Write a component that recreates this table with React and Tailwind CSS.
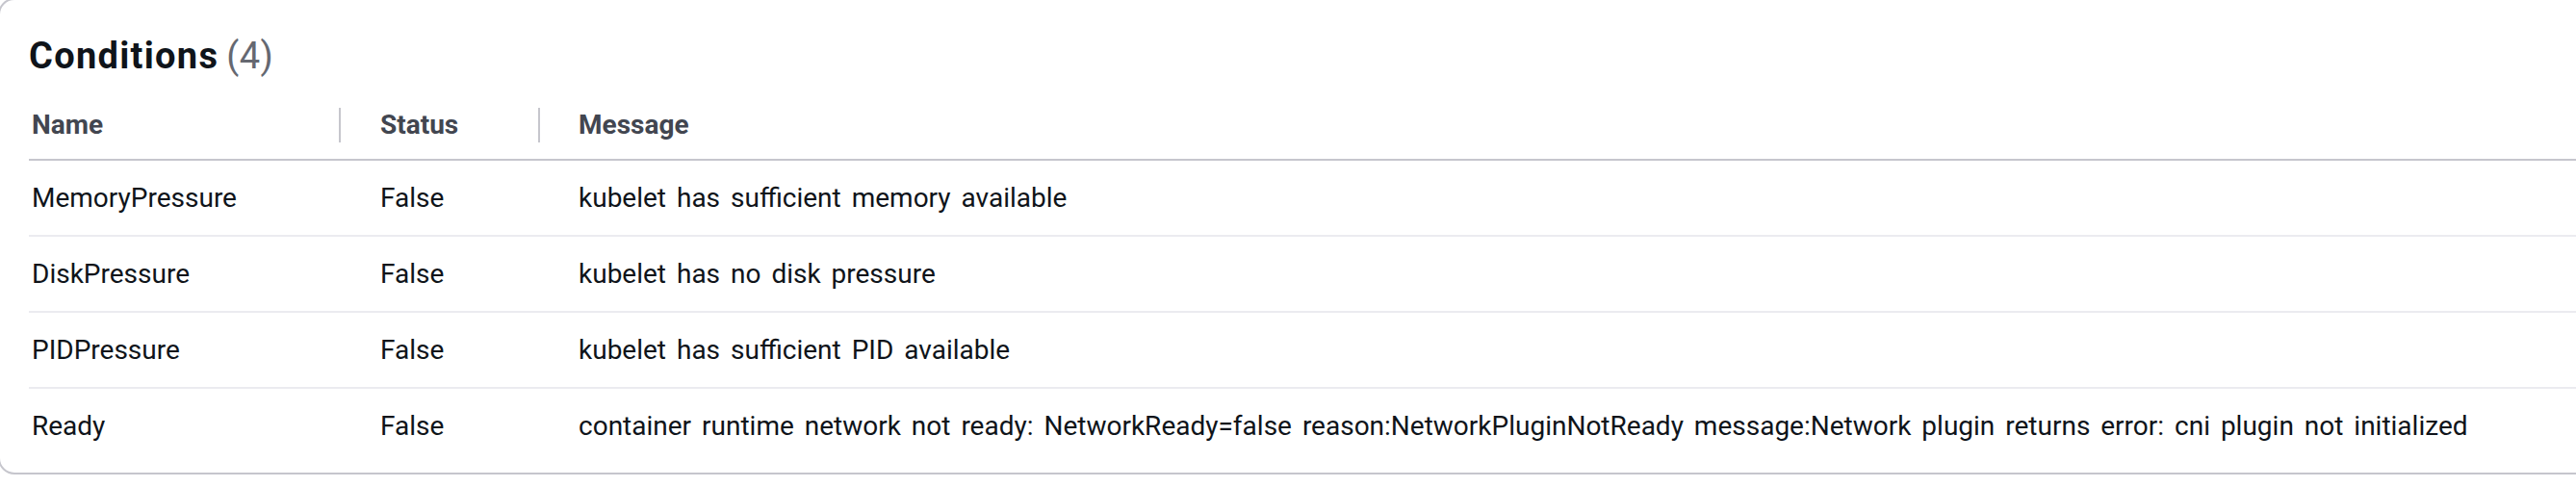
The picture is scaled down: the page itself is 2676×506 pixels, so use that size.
import React from 'react';

// Rows of the node conditions table
const conditions = [
    { name: 'MemoryPressure', status: 'False', message: 'kubelet has sufficient memory available' },
    { name: 'DiskPressure', status: 'False', message: 'kubelet has no disk pressure' },
    { name: 'PIDPressure', status: 'False', message: 'kubelet has sufficient PID available' },
    {
        name: 'Ready',
        status: 'False',
        message:
            'container runtime network not ready: NetworkReady=false reason:NetworkPluginNotReady message:Network plugin returns error: cni plugin not initialized',
    },
];

// Header cell with the resize divider on its right edge
const HeaderCell = ({ label, first, divider }) => (
    <div className={`flex items-center justify-between pt-[15px] pb-[15px] ${first ? 'pl-[3px]' : 'pl-[41px]'}`}>
        <span className="text-[28px] leading-[40px] font-bold text-[#424650]">{label}</span>
        {divider && <span className="w-[2px] h-[36px] bg-[#c6c6cd]" />}
    </div>
);

const Row = ({ item, last }) => (
    <div
        className={`grid grid-cols-[324px_207px_1fr] text-[28px] leading-[40px] text-[#0f141a] [word-spacing:4px] ${
            last ? 'pt-[19px] pb-[18px]' : 'pt-[19px] pb-[18px] border-b-2 border-[#ebebf0]'
        }`}
    >
        <div className="pl-[3px]">{item.name}</div>
        <div className="pl-[41px]">{item.status}</div>
        <div className="pl-[40px] whitespace-nowrap">{item.message}</div>
    </div>
);

export default function App() {
    return (
        <div className="w-[2676px] h-[506px] overflow-hidden bg-white" style={{ fontFamily: 'Roboto, "Noto Sans", sans-serif' }}>
            <div className="-ml-[2px] -mt-[2px] w-[2740px] border-2 border-[#c6c6cd] rounded-[17px] bg-white pl-[30px] pt-[36px] pb-[10px]">
                <h2 className="text-[38px] leading-[44px] font-bold text-[#0f141a] tracking-[1.3px] mb-[15px]">
                    Conditions<span className="ml-[8px] font-normal tracking-[0.5px] text-[#656871]">(4)</span>
                </h2>

                <div className="grid grid-cols-[324px_207px_1fr] border-b-2 border-[#c6c6cd]">
                    <HeaderCell label="Name" first divider />
                    <HeaderCell label="Status" divider />
                    <div className="pt-[15px] pb-[15px] pl-[40px] text-[28px] leading-[40px] font-bold text-[#424650]">Message</div>
                </div>

                {conditions.map((item, i) => (
                    <Row key={item.name} item={item} last={i === conditions.length - 1} />
                ))}
            </div>
        </div>
    );
}
